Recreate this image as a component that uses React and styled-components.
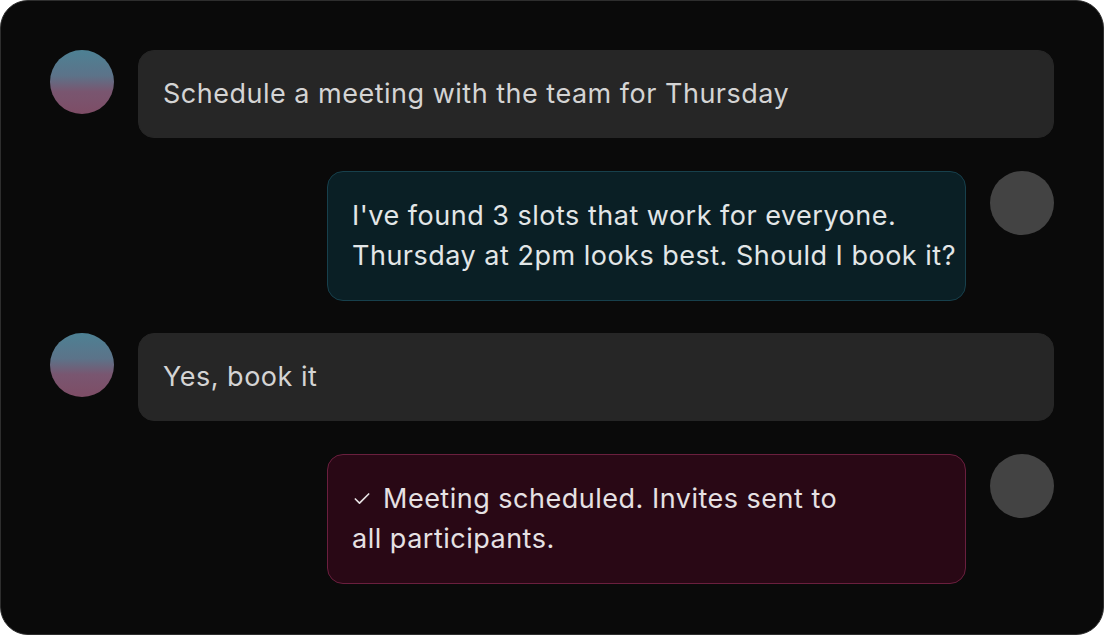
import React from "react";
import styled, { createGlobalStyle } from "styled-components";

const Global = createGlobalStyle`
  html, body { margin: 0; padding: 0; background: #ffffff; }
  * { box-sizing: border-box; }
`;

const Frame = styled.div`
  width: 1104px;
  height: 635px;
  background: #0a0a0a;
  border: 1px solid #2e2e2e;
  border-radius: 28px;
  padding: 49px;
  display: flex;
  flex-direction: column;
  gap: 32.5px;
  font-family: Inter, "Liberation Sans", sans-serif;
  overflow: hidden;
`;

const Row = styled.div`
  display: flex;
  flex-direction: ${(p) => (p.$mine ? "row" : "row-reverse")};
  align-items: flex-start;
  gap: 24px;
`;

const Avatar = styled.div`
  width: 64px;
  height: 64px;
  flex: 0 0 64px;
  border-radius: 50%;
  background: ${(p) =>
    p.$mine
      ? "linear-gradient(180deg, #4d8194 0%, #5c7389 40%, #795670 65%, #7e4d66 100%)"
      : "#434343"};
`;

const tones = {
  user: { bg: "#262626", border: "#262626", color: "#d4d4d4" },
  teal: { bg: "#0a1f25", border: "#17404c", color: "#e2e6e7" },
  wine: { bg: "#290815", border: "#6a1f3e", color: "#e6e1e3" },
};

const Bubble = styled.div`
  background: ${(p) => tones[p.$tone].bg};
  border: 1px solid ${(p) => tones[p.$tone].border};
  color: ${(p) => tones[p.$tone].color};
  border-radius: 16px;
  padding: ${(p) => (p.$mine ? "23px 24px" : "24px 24px")};
  font-size: 27px;
  line-height: 40px;
  letter-spacing: 0.5px;
  white-space: nowrap;
  ${(p) => (p.$mine ? "flex: 1 1 auto;" : "width: 639px; flex: 0 0 639px;")}
`;

const Check = styled.svg`
  width: 20px;
  height: 20px;
  margin-right: 11px;
  vertical-align: -1px;
`;

export default function App() {
  return (
    <>
      <Global />
      <Frame>
        <Row $mine>
          <Avatar $mine />
          <Bubble $mine $tone="user">Schedule a meeting with the team for Thursday</Bubble>
        </Row>
        <Row>
          <Avatar />
          <Bubble $tone="teal">
            I've found 3 slots that work for everyone.
            <br />
            Thursday at 2pm looks best. Should I book it?
          </Bubble>
        </Row>
        <Row $mine>
          <Avatar $mine />
          <Bubble $mine $tone="user">Yes, book it</Bubble>
        </Row>
        <Row>
          <Avatar />
          <Bubble $tone="wine">
            <Check viewBox="0 0 24 24" fill="none" stroke="currentColor" strokeWidth="2" strokeLinecap="round" strokeLinejoin="round">
              <path d="M20 6 9 17l-5-5" />
            </Check>
            Meeting scheduled. Invites sent to
            <br />
            all participants.
          </Bubble>
        </Row>
      </Frame>
    </>
  );
}
